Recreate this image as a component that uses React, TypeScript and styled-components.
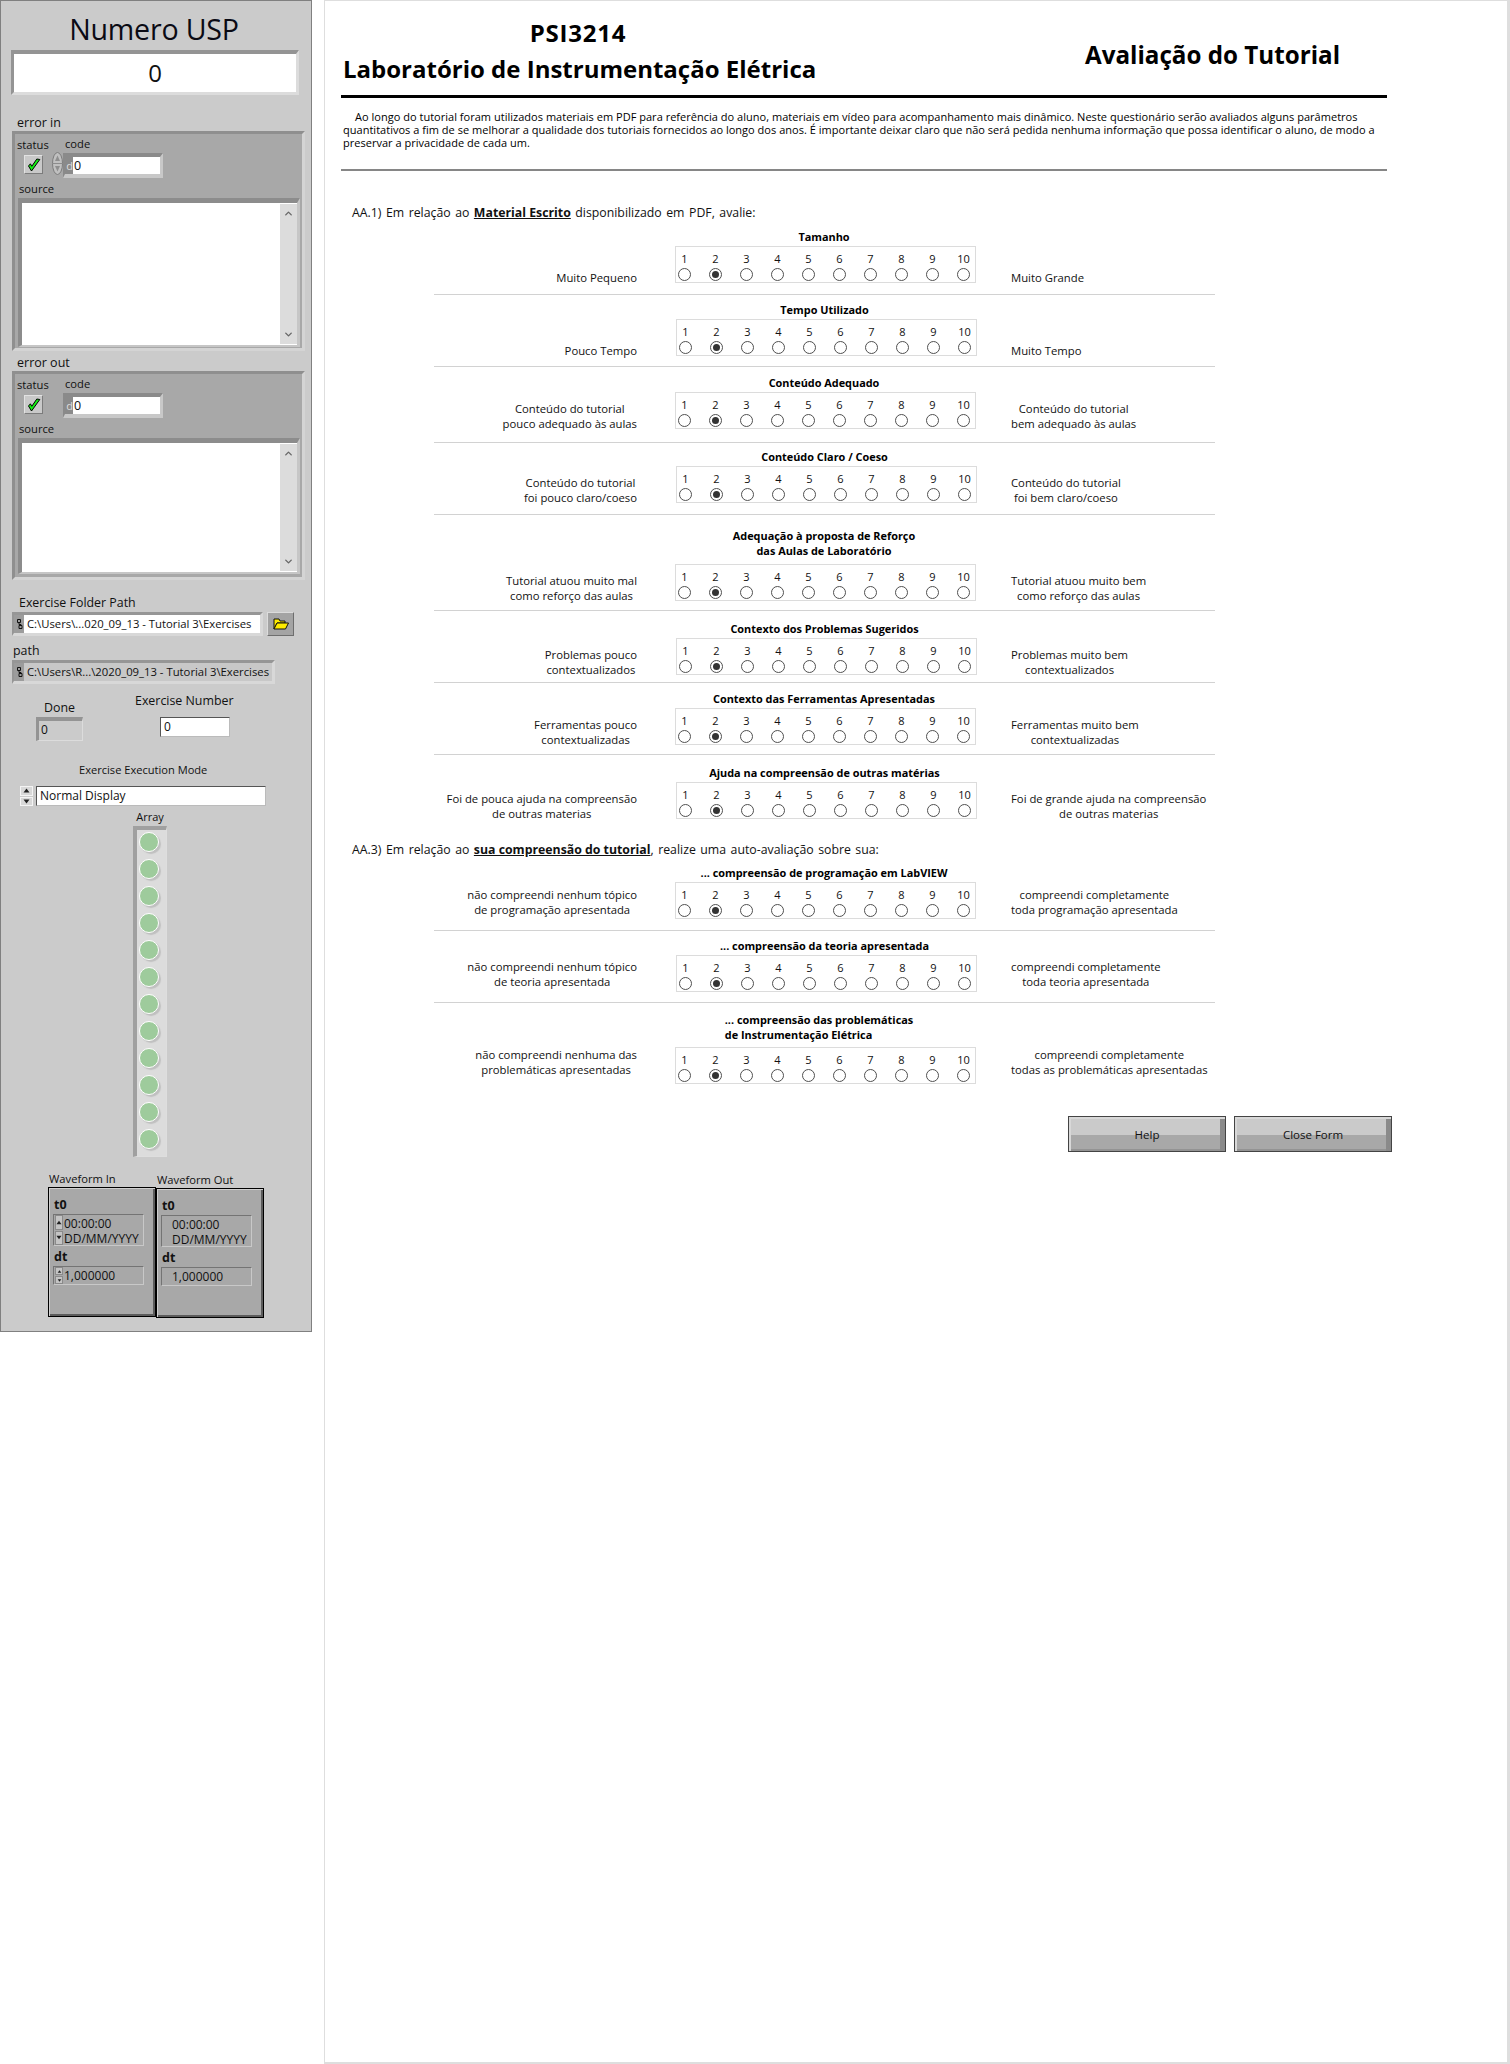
import React from "react";
import styled, { createGlobalStyle } from "styled-components";
import { ChevronUp, ChevronDown } from "lucide-react";

const Global = createGlobalStyle`
  html, body { margin: 0; padding: 0; background: #fff; }
  body { font-family: "Open Sans", "Noto Sans", sans-serif; color: #111; }
  * { box-sizing: border-box; }
`;

const Page = styled.div`
  display: flex;
  width: 1510px;
  height: 2064px;
  align-items: flex-start;
`;

const Side = styled.aside`
  width: 312px;
  height: 1332px;
  flex: none;
  background: #cbcbcb;
  border: 1px solid #808080;
  display: flex;
  flex-direction: column;
  align-items: flex-start;
  font-size: 12.5px;
`;

const Main = styled.main`
  margin-left: 12px;
  width: 1186px;
  height: 2064px;
  flex: none;
  border-style: solid;
  border-color: #dedede;
  border-width: 1px 3px 2px 1px;
  display: flex;
  flex-direction: column;
  align-items: flex-start;
`;

const sunken = `
  border-style: solid;
  border-color: #949494 #dcdcdc #dcdcdc #949494;
`;

const BigTitle = styled.div`
  margin-top: 8px;
  width: 306px;
  height: 40px;
  line-height: 40px;
  text-align: center;
  font-size: 28.6px;
  color: #0a0a14;
  letter-spacing: -0.2px;
`;

const BigInput = styled.div`
  margin: 1px 0 0 10px;
  width: 288px;
  height: 45px;
  ${sunken}
  border-width: 4px 3px 3px 3px;
  background: #fff;
  text-align: center;
  font-size: 24px;
  line-height: 38px;
`;

const SideLabel = styled.div<{ $mt: number; $ml: number; $size?: number }>`
  margin: ${(p) => p.$mt}px 0 0 ${(p) => p.$ml}px;
  height: 16px;
  line-height: 16px;
  font-size: ${(p) => p.$size ?? 12.5}px;
  white-space: nowrap;
`;

const Cluster = styled.section<{ $h: number }>`
  margin: 0 0 0 11px;
  width: 293px;
  height: ${(p) => p.$h}px;
  background: #a8a8a8;
  border-style: solid;
  border-width: 3px;
  border-color: #8f8f8f #d4d4d4 #d4d4d4 #8f8f8f;
  display: flex;
  flex-direction: column;
  align-items: flex-start;
`;

const HeadRow = styled.div`
  display: flex;
  margin: 4px 0 0 2px;
  height: 14px;
  line-height: 14px;
  font-size: 11.2px;
`;

const StatusHead = styled.span`
  width: 48px;
`;

const CodeHead = styled.span`
  margin-top: -1px;
`;

const ControlRow = styled.div`
  display: flex;
  align-items: center;
  margin: 1px 0 0 9px;
  height: 25px;
`;

const CheckBox = styled.div`
  width: 19px;
  height: 19px;
  margin-top: -2px;
  background: #c9c9c9;
  border: 1px solid;
  border-color: #e2e2e2 #7c7c7c #7c7c7c #e2e2e2;
  display: flex;
  align-items: center;
  justify-content: center;
`;

const SpinSlot = styled.div`
  margin-left: 9px;
  width: 11px;
  height: 23px;
  margin-top: -4px;
  flex: none;
`;

const CodeField = styled.div`
  width: 100px;
  height: 25px;
  ${sunken}
  border-color: #8a8a8a #c8c8c8 #c8c8c8 #8a8a8a;
  border-width: 4px 3px 4px 2px;
  display: flex;
  background: #fff;
  font-size: 12.5px;
  line-height: 17px;
`;

const Radix = styled.span`
  width: 8px;
  background: #8a8a8a;
  color: #ddd;
  text-align: right;
  font-size: 11px;
  margin-right: 1px;
`;

const SourceLabel = styled.div`
  margin: 4px 0 0 4px;
  height: 14px;
  line-height: 14px;
  font-size: 11.2px;
`;

const TextBox = styled.div<{ $h: number }>`
  margin: 2px 0 0 3px;
  width: 282px;
  height: ${(p) => p.$h}px;
  background: #fff;
  border-style: solid;
  border-width: 5px 3px 2px 4px;
  border-color: #8c8c8c #c6c6c6 #c6c6c6 #8c8c8c;
  display: flex;
  justify-content: flex-end;
`;

const ScrollTrack = styled.div`
  width: 17px;
  margin: 1px 0 1px 0;
  background: #dcdcdc;
  display: flex;
  flex-direction: column;
  justify-content: space-between;
  align-items: center;
  padding: 4px 0;
  color: #666;
`;

const PathRow = styled.div`
  display: flex;
  margin: 1px 0 0 11px;
`;

const PathField = styled.div<{ $w: number; $white?: boolean }>`
  width: ${(p) => p.$w}px;
  height: 24px;
  ${sunken}
  border-color: #969696 #d8d8d8 #d8d8d8 #969696;
  border-width: 3px 3px 3px 2px;
  display: flex;
  align-items: stretch;
  font-size: 11.3px;
  line-height: 18px;
  white-space: nowrap;
  background: ${(p) => (p.$white ? "#fff" : "#c8c8c8")};
`;

const PathGlyph = styled.span`
  width: 10px;
  background: #9c9c9c;
  margin-right: 3px;
  display: flex;
  align-items: center;
  justify-content: center;
  flex: none;
`;

const BrowseBtn = styled.div`
  margin-left: 4px;
  width: 27px;
  height: 24px;
  background: #a4a4a4;
  border: 1px solid;
  border-color: #dcdcdc #6e6e6e #6e6e6e #dcdcdc;
  display: flex;
  align-items: center;
  justify-content: center;
`;

const NumbersRow = styled.div`
  display: flex;
  margin: 9px 0 0 35px;
  height: 48px;
`;

const DoneCol = styled.div`
  width: 47px;
  padding-top: 7px;
  text-align: center;
`;

const NumberLabel = styled.div`
  height: 16px;
  line-height: 16px;
  font-size: 12.4px;
  white-space: nowrap;
`;

const DoneBox = styled.div`
  margin-top: 1px;
  height: 24px;
  ${sunken}
  border-width: 4px 1px 1px 3px;
  text-align: left;
  padding-left: 2px;
  line-height: 18px;
  font-size: 12px;
`;

const ExCol = styled.div`
  margin-left: 52px;
  width: 100px;
`;

const ExInput = styled.div`
  margin: 8px 0 0 25px;
  width: 70px;
  height: 20px;
  background: #fff;
  border: 1px solid;
  border-color: #555 #bbb #bbb #555;
  padding-left: 3px;
  line-height: 17px;
  font-size: 12px;
`;

const RingRow = styled.div`
  display: flex;
  margin: 8px 0 0 19px;
  height: 20px;
`;

const RingSpin = styled.div`
  width: 13px;
  display: flex;
  flex-direction: column;
  gap: 1px;
`;

const RingArrow = styled.div`
  flex: 1;
  background: #d8d8d8;
  border: 1px solid #f4f4f4;
  display: flex;
  align-items: center;
  justify-content: center;
`;

const RingField = styled.div`
  margin-left: 3px;
  width: 230px;
  background: #fff;
  border: 1px solid;
  border-color: #555 #bbb #bbb #555;
  padding-left: 3px;
  line-height: 18px;
  font-size: 12px;
`;

const ArrayCol = styled.div`
  margin: 4px 0 0 132px;
  width: 34px;
  text-align: center;
  font-size: 11px;
`;

const ArrayLabel = styled.div`
  height: 14px;
  line-height: 14px;
`;

const ArrayBox = styled.div`
  margin-top: 2px;
  height: 331px;
  background: #dcdcdc;
  border-style: solid;
  border-width: 4px 1px 1px 4px;
  border-color: #a0a0a0 #dedede #dedede #a0a0a0;
  display: flex;
  flex-direction: column;
  align-items: center;
  padding: 2px 5px 0 0;
  gap: 7px;
`;

const Led = styled.div`
  width: 20px;
  height: 20px;
  flex: none;
  border-radius: 50%;
  background: #9ecb9c;
  border: 1px solid #fff;
  box-shadow: 2px 2px 1px #c0c0c0;
`;

const WaveRow = styled.div`
  display: flex;
  margin: 14px 0 0 47px;
`;

const WaveCol = styled.div<{ $mt: number }>`
  width: 108px;
  margin-top: ${(p) => p.$mt}px;
`;

const WaveLabel = styled.div`
  height: 16px;
  line-height: 16px;
  margin-left: 1px;
  font-size: 11.2px;
  white-space: nowrap;
`;

const WaveBox = styled.div`
  height: 130px;
  background: #a8a8a8;
  border: 1px solid #000;
  box-shadow: inset 1px 1px 0 #cfcfcf, inset -2px -2px 0 #5c5c5c;
  padding: 10px 0 0 5px;
`;

const WaveHead = styled.div<{ $mt: number }>`
  margin-top: ${(p) => p.$mt}px;
  height: 14px;
  line-height: 14px;
  font-weight: 700;
  font-size: 12.5px;
`;

const WaveField = styled.div<{ $h: number }>`
  margin: 2px 0 0 -1px;
  width: 91px;
  height: ${(p) => p.$h}px;
  border: 1px solid;
  border-color: #747474 #c8c8c8 #c8c8c8 #747474;
  display: flex;
  font-size: 12px;
  line-height: 15px;
  white-space: nowrap;
`;

const WaveSpin = styled.div<{ $on: boolean }>`
  width: 8px;
  margin: 0 1px 0 1px;
  flex: none;
  display: flex;
  flex-direction: column;
  gap: 1px;
  visibility: ${(p) => (p.$on ? "visible" : "hidden")};
`;

const WaveSpinBtn = styled.div`
  flex: 1;
  background: #c4c4c4;
  border: 1px solid #8a8a8a;
  display: flex;
  align-items: center;
  justify-content: center;
`;

const WaveText = styled.div`
  margin-top: 1px;
`;

/* right panel */

const Header = styled.header`
  display: flex;
  align-items: flex-start;
  padding: 14px 0 0 18px;
  height: 87px;
`;

const HeaderLeft = styled.div`
  width: 470px;
  text-align: center;
  font-weight: 700;
  font-size: 24px;
  line-height: 36px;
  color: #000;
  white-space: nowrap;
`;

const CourseCode = styled.span`
  letter-spacing: 0.8px;
`;

const HeaderRight = styled.div`
  margin: 22px 0 0 272px;
  font-weight: 700;
  font-size: 24.2px;
  line-height: 36px;
  color: #000;
  white-space: nowrap;
`;

const ThickRule = styled.div`
  margin: 7px 0 0 16px;
  width: 1046px;
  height: 3px;
  background: #000;
`;

const Intro = styled.p`
  margin: 12px 0 0 18px;
  font-size: 11px;
  line-height: 13px;
  letter-spacing: 0.02px;
  color: #000;
  white-space: nowrap;
  text-indent: 12px;
`;

const GreyRule = styled.div`
  margin: 20px 0 0 16px;
  width: 1046px;
  height: 2px;
  background: #868686;
`;

const Question = styled.div<{ $mt: number }>`
  margin: ${(p) => p.$mt}px 0 0 27px;
  line-height: 15px;
  height: 15px;
  font-size: 12.3px;
  word-spacing: 1.3px;
  white-space: nowrap;
  b {
    text-decoration: underline;
    font-weight: 700;
    word-spacing: 0;
  }
`;

const Rows = styled.div<{ $mt?: number }>`
  margin: ${(p) => p.$mt ?? 0}px 0 0 109px;
  width: 781px;
`;

const Row = styled.div<{ $pt: number; $pb: number; $rule: boolean }>`
  display: grid;
  grid-template-columns: 203px 301px 204px;
  column-gap: 36.5px;
  padding: ${(p) => p.$pt}px 0 ${(p) => p.$pb}px;
  border-bottom: ${(p) => (p.$rule ? "1px solid #d2d2d2" : "0")};
  align-items: end;
`;

const RowTitle = styled.div<{ $gap: number; $left?: boolean; $shift: number }>`
  grid-column: 2;
  justify-self: center;
  margin: 0 ${(p) => (p.$left ? 10 : 0)}px ${(p) => p.$gap}px ${(p) => p.$shift}px;
  font-weight: 700;
  font-size: 10.9px;
  line-height: 15px;
  text-align: ${(p) => (p.$left ? "left" : "center")};
  white-space: nowrap;
  color: #000;
`;

const SideText = styled.div<{ $lift: number; $side: "l" | "r" }>`
  grid-row: 2;
  justify-self: ${(p) => (p.$side === "l" ? "end" : "start")};
  margin-bottom: ${(p) => p.$lift}px;
  text-align: center;
  font-size: 11.3px;
  line-height: 15px;
  white-space: nowrap;
`;

const ScaleBox = styled.div<{ $shift: number }>`
  grid-row: 2;
  grid-column: 2;
  margin-left: ${(p) => p.$shift + 1.5}px;
  width: 301px;
  height: 37px;
  border: 1px solid #dcdcdc;
  padding: 5px 0 0 2px;
  display: grid;
  grid-template-columns: repeat(10, 13px);
  grid-template-rows: 14px 13px;
  column-gap: 18px;
  row-gap: 2px;
  justify-items: center;
`;

const ScaleNum = styled.span`
  font-size: 11px;
  line-height: 14px;
  color: #111;
`;

const Radio = styled.span<{ $on: boolean }>`
  width: 13px;
  height: 13px;
  border-radius: 50%;
  border: 1.4px solid #505050;
  background: #fff;
  display: flex;
  align-items: center;
  justify-content: center;
  &::after {
    content: "";
    width: 7px;
    height: 7px;
    border-radius: 50%;
    background: #333;
    display: ${(p) => (p.$on ? "block" : "none")};
  }
`;

const Buttons = styled.div`
  display: flex;
  gap: 8px;
  margin: 32px 0 0 743px;
`;

const PushButton = styled.button`
  width: 158px;
  height: 36px;
  padding: 0;
  border: 1px solid #444;
  font-family: inherit;
  font-size: 11.5px;
  color: #111;
  background: linear-gradient(#cacaca 0 52%, #a8a8a8 52% 100%);
  box-shadow: inset 2px 2px 0 #d8d8d8, inset -5px 0 0 #8a8a8a, inset 0 -2px 0 #939393;
`;

const Spin = () => (
  <svg width="11" height="23" viewBox="0 0 11 23">
    <ellipse cx="5.5" cy="11.5" rx="5" ry="11" fill="#c0c0c0" stroke="#7c7c7c" />
    <path d="M1 11.5H10" stroke="#8c8c8c" />
    <path d="M5.5 3.5 L8 9 H3 Z" fill="#8e8e8e" />
    <path d="M5.5 19.5 L8 14 H3 Z" fill="#8e8e8e" />
  </svg>
);

const Check = () => (
  <svg width="14" height="14" viewBox="0 0 14 14">
    <path d="M1.5 8 L4.5 13 L12.8 1.5 L9.8 1 L4.8 8.3 L3.4 5.8 Z" fill="#14f014" stroke="#000" strokeWidth="1" />
  </svg>
);

const PathIcon = () => (
  <svg width="7" height="12" viewBox="0 0 7 12">
    <path d="M1.5 1.5H4.5V4.5H1.5ZM3 4.5V6.5H5V7.5M3 7.5H6V10.5H3Z" fill="none" stroke="#111" />
  </svg>
);

const FolderIcon = () => (
  <svg width="16" height="12" viewBox="0 0 16 12">
    <path d="M1 1H6L7 3H12V5H4L1 11Z" fill="#ffec00" stroke="#111" />
    <path d="M1 11L4 5H15.5L12.5 11Z" fill="#ffec00" stroke="#111" />
  </svg>
);

const Tri = ({ up, size = 5 }: { up: boolean; size?: number }) => (
  <svg width={size + 2} height={size} viewBox="0 0 7 5">
    <path d={up ? "M3.5 0.5 L6.5 4.5 H0.5 Z" : "M3.5 4.5 L6.5 0.5 H0.5 Z"} fill="#222" />
  </svg>
);

const Scroll = () => (
  <ScrollTrack>
    <ChevronUp size={11} strokeWidth={3} />
    <ChevronDown size={11} strokeWidth={3} />
  </ScrollTrack>
);

const ErrorCluster = ({ h, box, spin }: { h: number; box: number; spin: boolean }) => (
  <Cluster $h={h}>
    <HeadRow>
      <StatusHead>status</StatusHead>
      <CodeHead>code</CodeHead>
    </HeadRow>
    <ControlRow>
      <CheckBox>
        <Check />
      </CheckBox>
      <SpinSlot>{spin && <Spin />}</SpinSlot>
      <CodeField>
        <Radix>d</Radix>0
      </CodeField>
    </ControlRow>
    <SourceLabel>source</SourceLabel>
    <TextBox $h={box}>
      <Scroll />
    </TextBox>
  </Cluster>
);

const Waveform = ({ label, mt, spin }: { label: string; mt: number; spin: boolean }) => (
  <WaveCol $mt={mt}>
    <WaveLabel>{label}</WaveLabel>
    <WaveBox>
      <WaveHead $mt={0}>t0</WaveHead>
      <WaveField $h={32}>
        <WaveSpin $on={spin}>
          <WaveSpinBtn>
            <Tri up />
          </WaveSpinBtn>
          <WaveSpinBtn>
            <Tri up={false} />
          </WaveSpinBtn>
        </WaveSpin>
        <WaveText>
          00:00:00
          <br />
          DD/MM/YYYY
        </WaveText>
      </WaveField>
      <WaveHead $mt={4}>dt</WaveHead>
      <WaveField $h={19}>
        <WaveSpin $on={spin}>
          <WaveSpinBtn>
            <Tri up size={3} />
          </WaveSpinBtn>
          <WaveSpinBtn>
            <Tri up={false} size={3} />
          </WaveSpinBtn>
        </WaveSpin>
        <WaveText>1,000000</WaveText>
      </WaveField>
    </WaveBox>
  </WaveCol>
);

type RowData = {
  title: React.ReactNode;
  left: React.ReactNode;
  right: React.ReactNode;
  pt: number;
  pb: number;
  gap?: number;
  shift?: number;
  rule?: boolean;
  lift?: number;
  titleLeft?: boolean;
};

const Two = (a: string, b: string) => (
  <>
    {a}
    <br />
    {b}
  </>
);

const firstRows: RowData[] = [
  { title: "Tamanho", left: "Muito Pequeno", right: "Muito Grande", pt: 0, pb: 11 },
  { title: "Tempo Utilizado", left: "Pouco Tempo", right: "Muito Tempo", pt: 7, pb: 10, shift: 1 },
  { title: "Conteúdo Adequado", left: Two("Conteúdo do tutorial", "pouco adequado às aulas"), right: Two("Conteúdo do tutorial", "bem adequado às aulas"), pt: 8, pb: 13 },
  { title: "Conteúdo Claro / Coeso", left: Two("Conteúdo do tutorial", "foi pouco claro/coeso"), right: Two("Conteúdo do tutorial", "foi bem claro/coeso"), pt: 6, pb: 11, shift: 1 },
  { title: Two("Adequação à proposta de Reforço", "das Aulas de Laboratório"), left: Two("Tutorial atuou muito mal", "como reforço das aulas"), right: Two("Tutorial atuou muito bem", "como reforço das aulas"), pt: 13, pb: 9, gap: 6 },
  { title: "Contexto dos Problemas Sugeridos", left: Two("Problemas pouco", "contextualizados"), right: Two("Problemas muito bem", "contextualizados"), pt: 10, pb: 7, shift: 1 },
  { title: "Contexto das Ferramentas Apresentadas", left: Two("Ferramentas pouco", "contextualizadas"), right: Two("Ferramentas muito bem", "contextualizadas"), pt: 8, pb: 9 },
  { title: "Ajuda na compreensão de outras matérias", left: Two("Foi de pouca ajuda na compreensão", "de outras materias"), right: Two("Foi de grande ajuda na compreensão", "de outras materias"), pt: 10, pb: 0, shift: 1, rule: false },
];

const secondRows: RowData[] = [
  { title: "... compreensão de programação em LabVIEW", left: Two("não compreendi nenhum tópico", "de programação apresentada"), right: Two("compreendi completamente", "toda programação apresentada"), pt: 8, pb: 11, lift: 2 },
  { title: "... compreensão da teoria apresentada", left: Two("não compreendi nenhum tópico", "de teoria apresentada"), right: Two("compreendi completamente", "toda teoria apresentada"), pt: 7, pb: 10, shift: 1, lift: 3 },
  { title: Two("... compreensão das problemáticas", "de Instrumentação Elétrica"), left: Two("não compreendi nenhuma das", "problemáticas apresentadas"), right: Two("compreendi completamente", "todas as problemáticas apresentadas"), pt: 9, pb: 0, gap: 5, lift: 7, titleLeft: true, rule: false },
];

const Rating = ({ d }: { d: RowData }) => {
  const shift = d.shift ?? 0;
  const lift = d.lift ?? -2;
  return (
    <Row $pt={d.pt} $pb={d.pb} $rule={d.rule ?? true}>
      <RowTitle $gap={d.gap ?? 2} $left={d.titleLeft} $shift={shift}>
        {d.title}
      </RowTitle>
      <SideText $lift={lift} $side="l">
        {d.left}
      </SideText>
      <ScaleBox $shift={shift}>
        {Array.from({ length: 10 }, (_, i) => (
          <ScaleNum key={i}>{i + 1}</ScaleNum>
        ))}
        {Array.from({ length: 10 }, (_, i) => (
          <Radio key={i} $on={i === 1} />
        ))}
      </ScaleBox>
      <SideText $lift={lift} $side="r">
        {d.right}
      </SideText>
    </Row>
  );
};

export default function App() {
  return (
    <Page>
      <Global />
      <Side>
        <BigTitle>Numero USP</BigTitle>
        <BigInput>0</BigInput>
        <SideLabel $mt={20} $ml={16}>error in</SideLabel>
        <ErrorCluster h={220} box={149} spin />
        <SideLabel $mt={4} $ml={16}>error out</SideLabel>
        <ErrorCluster h={209} box={136} spin={false} />
        <SideLabel $mt={15} $ml={18} $size={12.4}>Exercise Folder Path</SideLabel>
        <PathRow>
          <PathField $w={251} $white>
            <PathGlyph>
              <PathIcon />
            </PathGlyph>
            C:\Users\...020_09_13 - Tutorial 3\Exercises
          </PathField>
          <BrowseBtn>
            <FolderIcon />
          </BrowseBtn>
        </PathRow>
        <SideLabel $mt={7} $ml={12} $size={12.4}>path</SideLabel>
        <PathRow>
          <PathField $w={263}>
            <PathGlyph>
              <PathIcon />
            </PathGlyph>
            C:\Users\R...\2020_09_13 - Tutorial 3\Exercises
          </PathField>
        </PathRow>
        <NumbersRow>
          <DoneCol>
            <NumberLabel>Done</NumberLabel>
            <DoneBox>0</DoneBox>
          </DoneCol>
          <ExCol>
            <NumberLabel>Exercise Number</NumberLabel>
            <ExInput>0</ExInput>
          </ExCol>
        </NumbersRow>
        <SideLabel $mt={21} $ml={78} $size={11.1}>Exercise Execution Mode</SideLabel>
        <RingRow>
          <RingSpin>
            <RingArrow>
              <Tri up />
            </RingArrow>
            <RingArrow>
              <Tri up={false} />
            </RingArrow>
          </RingSpin>
          <RingField>Normal Display</RingField>
        </RingRow>
        <ArrayCol>
          <ArrayLabel>Array</ArrayLabel>
          <ArrayBox>
            {Array.from({ length: 12 }, (_, i) => (
              <Led key={i} />
            ))}
          </ArrayBox>
        </ArrayCol>
        <WaveRow>
          <Waveform label="Waveform In" mt={0} spin />
          <Waveform label="Waveform Out" mt={1} spin={false} />
        </WaveRow>
      </Side>
      <Main>
        <Header>
          <HeaderLeft>
            <CourseCode>PSI3214</CourseCode>
            <br />
            Laboratório de Instrumentação Elétrica
          </HeaderLeft>
          <HeaderRight>Avaliação do Tutorial</HeaderRight>
        </Header>
        <ThickRule />
        <Intro>
          Ao longo do tutorial foram utilizados materiais em PDF para referência do aluno, materiais em vídeo para acompanhamento mais dinâmico. Neste questionário serão avaliados alguns parâmetros
          <br />
          quantitativos a fim de se melhorar a qualidade dos tutoriais fornecidos ao longo dos anos. É importante deixar claro que não será pedida nenhuma informação que possa identificar o aluno, de modo a
          <br />
          preservar a privacidade de cada um.
        </Intro>
        <GreyRule />
        <Question $mt={34}>
          AA.1) Em relação ao <b>Material Escrito</b> disponibilizado em PDF, avalie:
        </Question>
        <Rows $mt={9}>
          {firstRows.map((d, i) => (
            <Rating key={i} d={d} />
          ))}
        </Rows>
        <Question $mt={23}>
          AA.3) Em relação ao <b>sua compreensão do tutorial</b>, realize uma auto-avaliação sobre sua:
        </Question>
        <Rows>
          {secondRows.map((d, i) => (
            <Rating key={i} d={d} />
          ))}
        </Rows>
        <Buttons>
          <PushButton>Help</PushButton>
          <PushButton>Close Form</PushButton>
        </Buttons>
      </Main>
    </Page>
  );
}
